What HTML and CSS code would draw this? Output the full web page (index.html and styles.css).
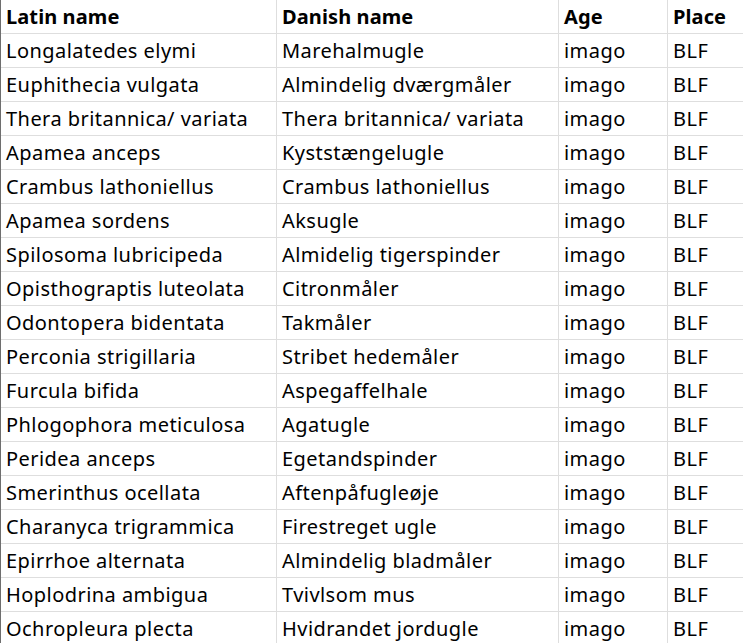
FILE: index.html
```html
<!DOCTYPE html>
<html>
<head>
<meta charset="utf-8">
<link rel="stylesheet" href="styles.css">
</head>
<body>
<div class="sheet">
  <div class="row head">
    <div class="cell c1">Latin name</div><div class="cell c2">Danish name</div><div class="cell c3">Age</div><div class="cell c4">Place</div>
  </div>
  <div class="row"><div class="cell c1">Longalatedes elymi</div><div class="cell c2">Marehalmugle</div><div class="cell c3">imago</div><div class="cell c4">BLF</div></div>
  <div class="row"><div class="cell c1">Euphithecia vulgata</div><div class="cell c2">Almindelig dværgmåler</div><div class="cell c3">imago</div><div class="cell c4">BLF</div></div>
  <div class="row"><div class="cell c1">Thera britannica/ variata</div><div class="cell c2">Thera britannica/ variata</div><div class="cell c3">imago</div><div class="cell c4">BLF</div></div>
  <div class="row"><div class="cell c1">Apamea anceps</div><div class="cell c2">Kyststængelugle</div><div class="cell c3">imago</div><div class="cell c4">BLF</div></div>
  <div class="row"><div class="cell c1">Crambus lathoniellus</div><div class="cell c2">Crambus lathoniellus</div><div class="cell c3">imago</div><div class="cell c4">BLF</div></div>
  <div class="row"><div class="cell c1">Apamea sordens</div><div class="cell c2">Aksugle</div><div class="cell c3">imago</div><div class="cell c4">BLF</div></div>
  <div class="row"><div class="cell c1">Spilosoma lubricipeda</div><div class="cell c2">Almidelig tigerspinder</div><div class="cell c3">imago</div><div class="cell c4">BLF</div></div>
  <div class="row"><div class="cell c1">Opisthograptis luteolata</div><div class="cell c2">Citronmåler</div><div class="cell c3">imago</div><div class="cell c4">BLF</div></div>
  <div class="row"><div class="cell c1">Odontopera bidentata</div><div class="cell c2">Takmåler</div><div class="cell c3">imago</div><div class="cell c4">BLF</div></div>
  <div class="row"><div class="cell c1">Perconia strigillaria</div><div class="cell c2">Stribet hedemåler</div><div class="cell c3">imago</div><div class="cell c4">BLF</div></div>
  <div class="row"><div class="cell c1">Furcula bifida</div><div class="cell c2">Aspegaffelhale</div><div class="cell c3">imago</div><div class="cell c4">BLF</div></div>
  <div class="row"><div class="cell c1">Phlogophora meticulosa</div><div class="cell c2">Agatugle</div><div class="cell c3">imago</div><div class="cell c4">BLF</div></div>
  <div class="row"><div class="cell c1">Peridea anceps</div><div class="cell c2">Egetandspinder</div><div class="cell c3">imago</div><div class="cell c4">BLF</div></div>
  <div class="row"><div class="cell c1">Smerinthus ocellata</div><div class="cell c2">Aftenpåfugleøje</div><div class="cell c3">imago</div><div class="cell c4">BLF</div></div>
  <div class="row"><div class="cell c1">Charanyca trigrammica</div><div class="cell c2">Firestreget ugle</div><div class="cell c3">imago</div><div class="cell c4">BLF</div></div>
  <div class="row"><div class="cell c1">Epirrhoe alternata</div><div class="cell c2">Almindelig bladmåler</div><div class="cell c3">imago</div><div class="cell c4">BLF</div></div>
  <div class="row"><div class="cell c1">Hoplodrina ambigua</div><div class="cell c2">Tvivlsom mus</div><div class="cell c3">imago</div><div class="cell c4">BLF</div></div>
  <div class="row"><div class="cell c1">Ochropleura plecta</div><div class="cell c2">Hvidrandet jordugle</div><div class="cell c3">imago</div><div class="cell c4">BLF</div></div>
</div>
</body>
</html>
```
FILE: styles.css
```css
html, body {
  margin: 0;
  padding: 0;
  background: #ffffff;
}
.sheet {
  border-left: 1px solid #6e6e6e;
  font-family: "Noto Sans", sans-serif;
  font-size: 20px;
  color: #000;
  width: 742px;
  overflow: hidden;
}
.row {
  display: grid;
  grid-template-columns: 276px 282px 109px 1fr;
  height: 34px;
}
.cell {
  height: 33px;
  line-height: 33px;
  border-bottom: 1px solid #dedede;
  border-right: 1px solid #dedede;
  padding-left: 5px;
  white-space: nowrap;
  overflow: hidden;
  letter-spacing: 0.45px;
}
.c4 { border-right: none; }
.head .cell {
  font-weight: bold;
  letter-spacing: 0.1px;
}
```
